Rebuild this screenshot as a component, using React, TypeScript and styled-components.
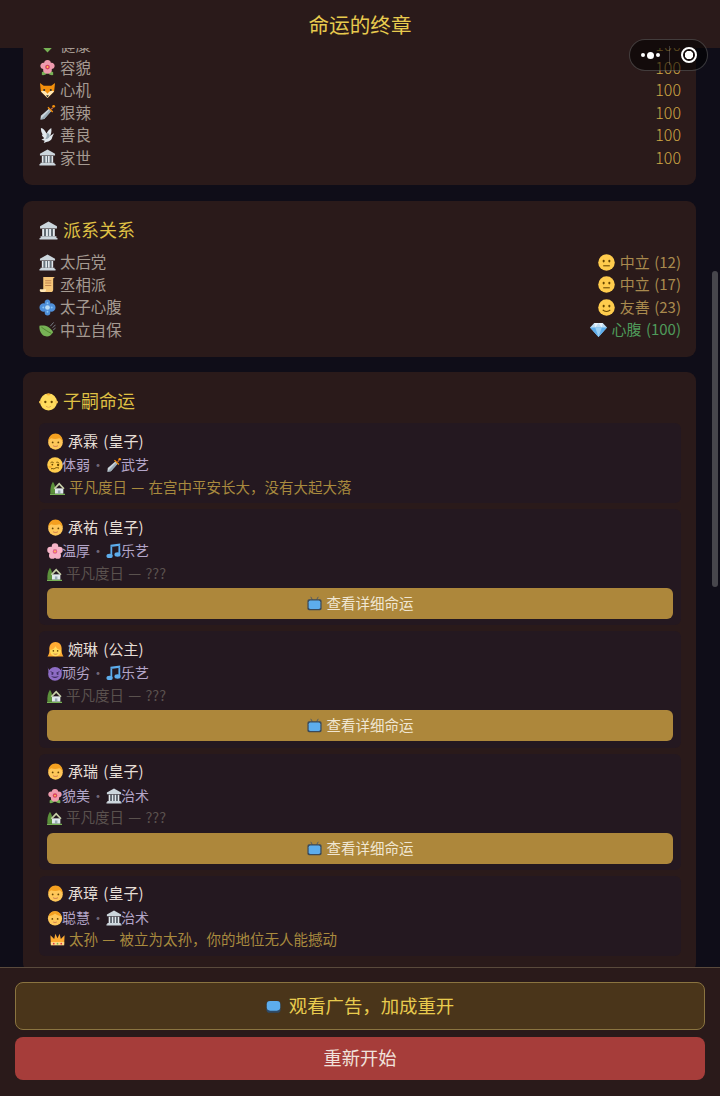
import React from "react"
import styled, { createGlobalStyle } from "styled-components"

const GlobalStyle = createGlobalStyle`
  html, body {
    margin: 0;
    padding: 0;
    height: 100%;
    background: #0f0d18;
  }
  body {
    font-family: "Noto Sans CJK SC", "Noto Sans", sans-serif;
  }
  * {
    box-sizing: border-box;
  }
`

const Face = ({ fill = "#FFCC4D" }: { fill?: string }) => <circle cx="18" cy="18" r="17.500" fill={fill} />

const Eyes = ({ y = 15 }: { y?: number }) => (
  <>
    <ellipse cx="12" cy={y} rx="2.2" ry="3" fill="#664500" />
    <ellipse cx="24" cy={y} rx="2.2" ry="3" fill="#664500" />
  </>
)

// no emoji font in the sandbox, so every emoji is a small drawing
const emojis: Record<string, React.ReactNode> = {
  heart: <path d="M18 33 3 17C-1 10 4 3 10 3c4 0 7 2 8 5 1-3 4-5 8-5 6 0 11 7 7 14z" fill="#77B255" />,
  hibiscus: (
    <>
      <path d="M6 28c4-3 8-3 12 0-2 5-8 7-12 6zm24 0c-4-3-8-3-12 0 2 5 8 7 12 6z" fill="#77B255" />
      <path d="M18 2c5 0 7 3 7 6 5-1 9 3 8 8-1 4-4 5-6 5 1 5-2 10-9 10s-10-5-9-10c-2 0-5-1-6-5-1-5 3-9 8-8 0-3 2-6 7-6z" fill="#EE9BAE" />
      <circle cx="18" cy="17" r="5" fill="#D8405F" />
      <circle cx="18" cy="17" r="2" fill="#FFCC4D" />
    </>
  ),
  fox: (
    <>
      <path d="M2 2l8 6h16l8-6-2 18-14 14L4 20z" fill="#F4900C" />
      <path d="M4 20c5-3 10-1 14 5 4-6 9-8 14-5L18 34z" fill="#FFE8B6" />
      <circle cx="11" cy="17" r="2.2" fill="#292F33" />
      <circle cx="25" cy="17" r="2.2" fill="#292F33" />
      <path d="M15 28h6l-3 5z" fill="#292F33" />
    </>
  ),
  dagger: (
    <>
      <path d="M3 33 4 25 21 10l5 5-15 17z" fill="#CCD6DD" />
      <path d="M3 33 22.500 12.500 26 15 11 32z" fill="#99AAB5" />
      <path d="M18 8l10 10 2-2L20 6z" fill="#F4900C" />
      <path d="M25 10l3-3 2 2-3 3z" fill="#C1694F" />
      <circle cx="31" cy="5" r="3" fill="#F4900C" />
    </>
  ),
  dove: (
    <>
      <path d="M4 2c5 1 9 5 12 12 2-5 5-9 10-12 1 7 0 13-3 17l9-6-3 6-2 6c-2 4-6 6-10 6l-7 3 2-5-7-2 6-3c-2-3-5-5-5-8 1 0 2 0 3 1C5 13 4 7 4 2z" fill="#E1E8ED" />
      <path d="M16 14c2-2 5-2 7 5-2 5-6 7-10 7 3-3 4-7 3-12z" fill="#99AAB5" />
    </>
  ),
  bank: (
    <>
      <path d="M18 1 2 10v4h32v-4z" fill="#CCD6DD" />
      <path d="M6 15h4v14H6zm7 0h4v14h-4zm6 0h4v14h-4zm7 0h4v14h-4z" fill="#E1E8ED" />
      <path d="M10 15h3v14h-3zm7 0h2v14h-2zm6 0h3v14h-3z" fill="#66757F" />
      <path d="M3 29h30v3H3zM1 32h34v3H1z" fill="#CCD6DD" />
    </>
  ),
  scroll: (
    <>
      <path d="M9 2h25c-3 1-4 3-4 6v21c0 3-2 5-5 5H4c3-1 5-3 5-6z" fill="#F7C77A" />
      <path d="M2 28h13c0 3-1 6-4 6H5c-3 0-4-3-3-6z" fill="#FFE8B6" />
      <path d="M13 9h13v2H13zm0 5h13v2H13zm0 5h13v2H13z" fill="#C1844F" />
    </>
  ),
  fluer: (
    <>
      <path d="M18 1c4 0 6 3 6 6 0 1 0 2-1 3 1-1 2-1 3-1 5 0 9 4 9 9s-4 9-9 9c-1 0-2 0-3-1 1 1 1 2 1 3 0 3-2 6-6 6s-6-3-6-6c0-1 0-2 1-3-1 1-2 1-3 1-5 0-9-4-9-9s4-9 9-9c1 0 2 0 3 1-1-1-1-2-1-3 0-3 2-6 6-6z" fill="#4F8FD9" />
      <circle cx="18" cy="18" r="5" fill="#BBDDF5" />
      <circle cx="18" cy="9" r="2" fill="#88C9F9" />
      <circle cx="9" cy="18" r="2" fill="#88C9F9" />
      <circle cx="27" cy="18" r="2" fill="#88C9F9" />
      <circle cx="18" cy="27" r="2" fill="#88C9F9" />
    </>
  ),
  leaf: (
    <>
      <path d="M1 10c10-2 22 0 29 14-5 8-11 10-18 8C4 29 0 19 1 10z" fill="#77B255" />
      <path d="M5 13c7 5 14 10 21 13" stroke="#3E721D" strokeWidth="1.500" fill="none" />
      <path d="M24 11 31 3M29 14l6-6M30 19l5-4" stroke="#99AAB5" strokeWidth="1.500" fill="none" />
    </>
  ),
  baby: (
    <>
      <circle cx="18" cy="19" r="16" fill="#FFDC5D" />
      <circle cx="3" cy="19" r="3" fill="#F9CA55" />
      <circle cx="33" cy="19" r="3" fill="#F9CA55" />
      <path d="M14 5c2-3 6-3 8 0-2 2-6 2-8 0z" fill="#F9B233" />
      <circle cx="12" cy="19" r="2.200" fill="#664500" />
      <circle cx="24" cy="19" r="2.200" fill="#664500" />
      <path d="M13 26c3 3 7 3 10 0-1 4-9 4-10 0z" fill="#C1694F" />
    </>
  ),
  neutral: (
    <>
      <Face />
      <Eyes />
      <path d="M11 25h14" stroke="#664500" strokeWidth="2.200" />
    </>
  ),
  smile: (
    <>
      <Face />
      <Eyes />
      <path d="M10 23c4 4.500 12 4.500 16 0" stroke="#664500" strokeWidth="2.200" fill="none" />
    </>
  ),
  gem: (
    <>
      <path d="M9 4h18l9 10-18 20L0 14z" fill="#BDDDF4" />
      <path d="M0 14h36L18 34z" fill="#5DADEC" />
      <path d="M11 14h14l-7 20z" fill="#9AD0F5" />
      <path d="M9 4l2 10 7-10 7 10 2-10z" fill="#E6F2FB" />
    </>
  ),
  boy: (
    <>
      <circle cx="18" cy="20" r="15.500" fill="#FFC75A" />
      <path d="M3 18C2 8 10 1 18 1s16 7 15 17c-2-4-5-7-7-7-5 2-13 2-17 0-2 1-5 3-6 7z" fill="#F4A020" />
      <circle cx="12" cy="20" r="1.900" fill="#664500" />
      <circle cx="24" cy="20" r="1.900" fill="#664500" />
      <path d="M13 27c3 2 7 2 10 0" stroke="#C1694F" strokeWidth="1.800" fill="none" />
    </>
  ),
  girl: (
    <>
      <path d="M18 2C8 2 4 10 5 20c0 6-2 10-4 13h34c-2-3-4-7-4-13 1-10-3-18-13-18z" fill="#FFAC33" />
      <circle cx="18" cy="21" r="11.500" fill="#FFDC5D" />
      <path d="M7 19c6-1 9-4 11-8 2 4 5 7 11 8 0-8-5-12-11-12S7 11 7 19z" fill="#FFAC33" />
      <circle cx="13.500" cy="21" r="1.700" fill="#664500" />
      <circle cx="22.500" cy="21" r="1.700" fill="#664500" />
      <path d="M14 27c3 1.500 5 1.500 8 0" stroke="#C1694F" strokeWidth="1.600" fill="none" />
    </>
  ),
  woozy: (
    <>
      <Face />
      <path d="M8 13c2-2 5-2 7 0M21 12c2-1 5 0 6 2" stroke="#664500" strokeWidth="2" fill="none" />
      <circle cx="12" cy="17" r="2" fill="#664500" />
      <circle cx="25" cy="18" r="2.600" fill="#664500" />
      <path d="M9 27c3-3 5 1 8-1s5-3 10-1" stroke="#664500" strokeWidth="2.200" fill="none" />
      <ellipse cx="7" cy="22" rx="4" ry="2.500" fill="#F4900C" opacity=".5" />
    </>
  ),
  blossom: (
    <>
      <g fill="#F7B4C8">
        <circle cx="18" cy="8" r="7.500" />
        <circle cx="8" cy="16" r="7.500" />
        <circle cx="28" cy="16" r="7.500" />
        <circle cx="12" cy="28" r="7.500" />
        <circle cx="24" cy="28" r="7.500" />
      </g>
      <circle cx="18" cy="19" r="5" fill="#E8638A" />
      <circle cx="18" cy="19" r="2" fill="#FFCC4D" />
    </>
  ),
  music: (
    <>
      <path d="M10 4 32 1v5L10 9zM10 5h4v24h-4zM28 3h4v22h-4z" fill="#5DADEC" />
      <ellipse cx="8" cy="29" rx="7" ry="5" fill="#5DADEC" />
      <ellipse cx="26" cy="26" rx="7" ry="5" fill="#5DADEC" />
    </>
  ),
  imp: (
    <>
      <path d="M1 2c1 6 3 9 7 10l-4 5zM35 2c-1 6-3 9-7 10l4 5z" fill="#8D6CC4" />
      <circle cx="18" cy="20" r="15.500" fill="#8D6CC4" />
      <path d="M8 15l7 3M28 15l-7 3" stroke="#3A2A5C" strokeWidth="2" />
      <circle cx="12" cy="20" r="2.200" fill="#3A2A5C" />
      <circle cx="24" cy="20" r="2.200" fill="#3A2A5C" />
      <path d="M9 25c5 6 13 6 18 0-5 2-13 2-18 0z" fill="#3A2A5C" />
    </>
  ),
  house: (
    <>
      <path d="M7 4c4 5 6 12 6 20l-1 9H1c-1-12 1-22 6-29z" fill="#5C913B" />
      <path d="M12 33V20h20v13z" fill="#E1E8ED" />
      <path d="M9 20 22 6l13 14-3 2-10-10-10 10z" fill="#C6CFA8" />
      <path d="M19 25h6v8h-6z" fill="#99AAB5" />
      <path d="M0 33h36v3H0z" fill="#77B255" />
    </>
  ),
  tv: (
    <>
      <path d="M13 9 9 2M23 9l4-7" stroke="#4A5968" strokeWidth="2.200" />
      <rect x="1" y="8" width="34" height="26" rx="4" fill="#3B4A5A" />
      <rect x="4" y="11" width="28" height="20" rx="4" fill="#5DADEC" />
    </>
  ),
  screen: (
    <>
      <rect x="1" y="5" width="34" height="28" rx="8" fill="#2F4A66" />
      <rect x="2" y="5" width="32" height="23" rx="8" fill="#5DADEC" />
    </>
  ),
  child: (
    <>
      <circle cx="18" cy="19" r="16" fill="#FFC75A" />
      <path d="M4 14C6 6 12 3 18 3s12 3 14 11c-5-1-11-3-14-6-3 3-9 5-14 6z" fill="#F4A020" />
      <circle cx="12" cy="20" r="2" fill="#664500" />
      <circle cx="24" cy="20" r="2" fill="#664500" />
      <path d="M14 27c3 1.500 5 1.500 8 0" stroke="#C1694F" strokeWidth="1.800" fill="none" />
    </>
  ),
  crown: (
    <>
      <path d="M2 30 1 8l9 9 3-13 5 11 5-11 3 13 9-9-1 22z" fill="#FFAC33" />
      <path d="M2 24h32v8H2z" fill="#FFD983" />
      <circle cx="9" cy="28" r="2" fill="#DD2E44" />
      <circle cx="18" cy="28" r="2" fill="#77B255" />
      <circle cx="27" cy="28" r="2" fill="#DD2E44" />
    </>
  ),
}

const EmojiSvg = styled.svg<{ $size: number }>`
  flex: none;
  width: ${(p) => p.$size}px;
  height: ${(p) => p.$size}px;
  margin-top: 2px;
`

const Emoji = ({ name, size = 15 }: { name: string; size?: number }) => (
  <EmojiSvg $size={size} viewBox="0 0 36 36">
    {emojis[name]}
  </EmojiSvg>
)

const stats = [
  { icon: "heart", label: "健康", value: 100 },
  { icon: "hibiscus", label: "容貌", value: 100 },
  { icon: "fox", label: "心机", value: 100 },
  { icon: "dagger", label: "狠辣", value: 100 },
  { icon: "dove", label: "善良", value: 100 },
  { icon: "bank", label: "家世", value: 100 },
]

const factions = [
  { icon: "bank", label: "太后党", mood: "neutral", status: "中立 (12)", close: false },
  { icon: "scroll", label: "丞相派", mood: "neutral", status: "中立 (17)", close: false },
  { icon: "fluer", label: "太子心腹", mood: "smile", status: "友善 (23)", close: false },
  { icon: "leaf", label: "中立自保", mood: "gem", status: "心腹 (100)", close: true },
]

const children = [
  {
    icon: "boy",
    name: "承霖 (皇子)",
    trait: ["woozy", "体弱"],
    skill: ["dagger", "武艺"],
    fateIcon: "house",
    fate: "平凡度日 — 在宫中平安长大，没有大起大落",
    locked: false,
  },
  {
    icon: "boy",
    name: "承祐 (皇子)",
    trait: ["blossom", "温厚"],
    skill: ["music", "乐艺"],
    fateIcon: "house",
    fate: "平凡度日 — ???",
    locked: true,
  },
  {
    icon: "girl",
    name: "婉琳 (公主)",
    trait: ["imp", "顽劣"],
    skill: ["music", "乐艺"],
    fateIcon: "house",
    fate: "平凡度日 — ???",
    locked: true,
  },
  {
    icon: "boy",
    name: "承瑞 (皇子)",
    trait: ["hibiscus", "貌美"],
    skill: ["bank", "治术"],
    fateIcon: "house",
    fate: "平凡度日 — ???",
    locked: true,
  },
  {
    icon: "boy",
    name: "承璋 (皇子)",
    trait: ["child", "聪慧"],
    skill: ["bank", "治术"],
    fateIcon: "crown",
    fate: "太孙 — 被立为太孙，你的地位无人能撼动",
    locked: false,
  },
]

const App = () => {
  return (
    <Page>
      <GlobalStyle />
      <Header>命运的终章</Header>
      <Capsule>
        <Dots>
          <Dot />
          <Dot $big />
          <Dot />
        </Dots>
        <CapsuleLine />
        <Target />
      </Capsule>
      <Main>
        <StatsCard>
          {stats.map((s) => (
            <Row key={s.label}>
              <Label>
                <Emoji name={s.icon} size={17} />
                {s.label}
              </Label>
              <StatValue>{s.value}</StatValue>
            </Row>
          ))}
        </StatsCard>
        <Card>
          <CardTitle>
            <Emoji name="bank" size={19} />
            派系关系
          </CardTitle>
          {factions.map((f) => (
            <Row key={f.label}>
              <Label>
                <Emoji name={f.icon} size={17} />
                {f.label}
              </Label>
              <Status $close={f.close}>
                <Emoji name={f.mood} size={17} />
                {f.status}
              </Status>
            </Row>
          ))}
        </Card>
        <ChildrenCard>
          <CardTitle>
            <Emoji name="baby" size={19} />
            子嗣命运
          </CardTitle>
          <ChildList>
            {children.map((c) => (
              <ChildCard key={c.name}>
                <ChildName>
                  <Emoji name={c.icon} size={17} />
                  {c.name}
                </ChildName>
                <Traits>
                  <Emoji name={c.trait[0]} size={16} />
                  {c.trait[1]}
                  <TraitDot>·</TraitDot>
                  <Emoji name={c.skill[0]} size={16} />
                  {c.skill[1]}
                </Traits>
                <Fate $locked={c.locked}>
                  <Emoji name={c.fateIcon} size={15} />
                  {c.fate}
                </Fate>
                {c.locked && (
                  <DetailButton>
                    <Emoji name="tv" size={15} />
                    查看详细命运
                  </DetailButton>
                )}
              </ChildCard>
            ))}
          </ChildList>
        </ChildrenCard>
      </Main>
      <Scrollbar />
      <Footer>
        <AdButton>
          <Emoji name="screen" size={15} />
          观看广告，加成重开
        </AdButton>
        <RestartButton>重新开始</RestartButton>
      </Footer>
    </Page>
  )
}

const Page = styled.div`
  position: relative;
  display: flex;
  flex-direction: column;
  width: 720px;
  height: 1096px;
  overflow: hidden;
  background: #0f0d18;
`

const Header = styled.header`
  flex: none;
  height: 48px;
  padding-bottom: 1px;
  display: flex;
  align-items: center;
  justify-content: center;
  background: #2a1a1a;
  color: #e8cb4e;
  font-size: 20.6px;
`

const Capsule = styled.div`
  position: absolute;
  top: 39px;
  left: 629px;
  width: 79px;
  height: 32px;
  display: flex;
  align-items: center;
  border: 1px solid rgba(255, 255, 255, 0.2);
  border-radius: 16px;
  background: rgba(0, 0, 0, 0.55);
  z-index: 2;
`

const Dots = styled.div`
  width: 39px;
  padding-left: 11px;
  display: flex;
  align-items: center;
  gap: 2px;
`

const Dot = styled.span<{ $big?: boolean }>`
  width: ${(p) => (p.$big ? 7 : 4)}px;
  height: ${(p) => (p.$big ? 7 : 4)}px;
  border-radius: 50%;
  background: #fff;
`

const CapsuleLine = styled.span`
  width: 1px;
  height: 19px;
  background: rgba(255, 255, 255, 0.2);
`

const Target = styled.span`
  width: 16px;
  height: 16px;
  margin-left: 11px;
  border: 2px solid #fff;
  border-radius: 50%;
  background: radial-gradient(circle, #fff 0 4px, transparent 4.5px);
`

const Main = styled.main`
  flex: 1;
  min-height: 0;
  overflow: hidden;
  padding: 0 24px 0 23px;
  display: flex;
  flex-direction: column;
  gap: 16px;
`

const Card = styled.section`
  flex: none;
  padding: 16px 15px 16px 16px;
  background: #2a1a1a;
  border-radius: 9px;
`

// the top of this card has scrolled away under the header
const StatsCard = styled(Card)`
  margin-top: -14px;
  padding-top: 0;
  border-radius: 0 0 9px 9px;
`

const ChildrenCard = styled(Card)`
  margin-top: -1px;
`

const CardTitle = styled.h2`
  margin: 0 0 8px;
  height: 26px;
  padding-bottom: 2px;
  display: flex;
  align-items: center;
  gap: 5px;
  color: #dfc044;
  font-size: 18px;
  font-weight: 400;
`

const Row = styled.div`
  height: 22.5px;
  padding-bottom: 2px;
  display: flex;
  align-items: center;
  justify-content: space-between;
  font-size: 15.4px;
`

const Label = styled.span`
  display: flex;
  align-items: center;
  gap: 4px;
  color: #a59a92;
`

const StatValue = styled.span`
  color: #d0a845;
  font-size: 16px;
  font-weight: 300;
`

const Status = styled.span<{ $close: boolean }>`
  display: flex;
  align-items: center;
  gap: 5px;
  font-size: 15px;
  word-spacing: 1px;
  color: ${(p) => (p.$close ? "#4f9a5a" : "#a98a4e")};
`

const ChildList = styled.div`
  margin-top: 9px;
  display: flex;
  flex-direction: column;
  gap: 6px;
`

const ChildCard = styled.article`
  padding: 7px 8px 5.2px;
  background: #241820;
  border-radius: 6px;
`

const ChildName = styled.div`
  height: 22px;
  margin-bottom: 2px;
  padding-bottom: 2px;
  display: flex;
  align-items: center;
  gap: 4px;
  color: #e6ded6;
  font-size: 15px;
  word-spacing: 2px;
`

const Traits = styled.div`
  height: 22px;
  padding-bottom: 2px;
  display: flex;
  align-items: center;
  color: #b3a5c8;
  font-size: 14px;
  svg {
    margin-right: -1px;
  }
`

const TraitDot = styled.span`
  width: 16px;
  text-align: center;
  color: #6f6678;
`

const Fate = styled.div<{ $locked: boolean }>`
  height: 22px;
  padding-bottom: 2px;
  display: flex;
  align-items: center;
  gap: 4px;
  padding-left: ${(p) => (p.$locked ? 0 : 3)}px;
  color: ${(p) => (p.$locked ? "#5a514e" : "#a88a3e")};
  font-size: 14.5px;
  word-spacing: 1px;
`

const DetailButton = styled.button`
  width: 100%;
  height: 31px;
  margin: 4px 0 1px;
  padding: 0 0 2px;
  display: flex;
  align-items: center;
  justify-content: center;
  gap: 5px;
  border: none;
  border-radius: 6px;
  background: #ad873b;
  color: #f0e6d2;
  font-family: inherit;
  font-size: 14.5px;
`

const Scrollbar = styled.div`
  position: absolute;
  top: 271px;
  left: 712px;
  width: 6px;
  height: 316px;
  border-radius: 3px;
  background: #47464c;
`

const Footer = styled.footer`
  flex: none;
  height: 129px;
  padding: 14px 15px 0;
  display: flex;
  flex-direction: column;
  gap: 7px;
  border-top: 1px solid #5a4a3c;
  background: #2a1a1a;
`

const AdButton = styled.button`
  height: 48px;
  padding: 0 0 2px;
  display: flex;
  align-items: center;
  justify-content: center;
  gap: 8px;
  border: 1px solid #8a7440;
  border-radius: 8px;
  background: #4a351a;
  color: #e8cb4e;
  font-family: inherit;
  font-size: 18.4px;
`

const RestartButton = styled.button`
  height: 43px;
  padding: 0 0 3px;
  border: none;
  border-radius: 8px;
  background: #a63d3a;
  color: #f0e2dc;
  font-family: inherit;
  font-size: 18.3px;
`

export default App
